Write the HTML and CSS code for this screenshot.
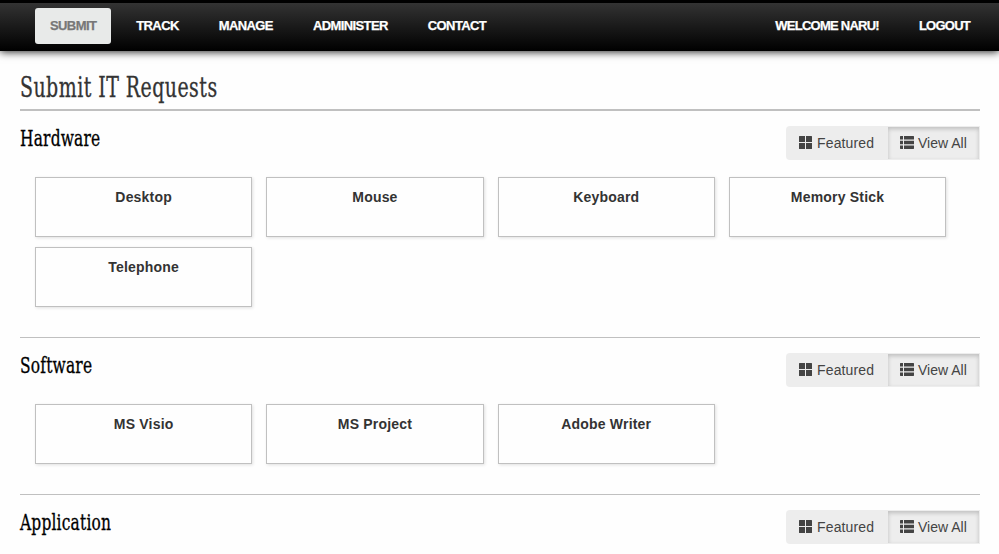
FILE: index.html
```html
<!DOCTYPE html>
<html lang="en">
<head>
<meta charset="utf-8">
<title>Submit IT Requests</title>
<link rel="stylesheet" href="styles.css">
</head>
<body>
<svg class="sprite" aria-hidden="true">
  <symbol id="grid" viewBox="0 0 14 14"><path d="M.6 0H6v6H0V.6Q0 0 .6 0zM7 0h5.400q.6 0 .6.6V6H7zM0 7h6v6H.6Q0 13 0 12.400zM7 7h6v5.400q0 .6-.6.6H7z"/></symbol>
  <symbol id="list" viewBox="0 0 14 14"><path d="M.5 0H3v3.500H0V.5zM4 0h9.500l.5.5v3H4zM0 4.800h3v3.500H0zM4 4.800h10v3.500H4zM0 9.500h3V13H.5l-.5-.5zM4 9.500h10v3l-.5.5H4z"/></symbol>
</svg>
<nav class="navbar">
  <a class="nav-link active">SUBMIT</a>
  <a class="nav-link">TRACK</a>
  <a class="nav-link">MANAGE</a>
  <a class="nav-link">ADMINISTER</a>
  <a class="nav-link">CONTACT</a>
  <a class="nav-link account push">WELCOME NARU!</a>
  <a class="nav-link account">LOGOUT</a>
</nav>
<main class="content">
  <h1 class="title"><span class="narrow">Submit IT Requests</span></h1>
  <section class="category">
    <header class="category-head">
      <h2 class="category-name"><span class="narrow">Hardware</span></h2>
      <div class="toggle">
        <a class="toggle-btn"><svg class="icon"><use href="#grid"/></svg>Featured</a>
        <a class="toggle-btn selected"><svg class="icon"><use href="#list"/></svg>View All</a>
      </div>
    </header>
    <div class="cards">
      <div class="card">Desktop</div>
      <div class="card">Mouse</div>
      <div class="card">Keyboard</div>
      <div class="card">Memory Stick</div>
      <div class="card">Telephone</div>
    </div>
  </section>
  <section class="category">
    <header class="category-head">
      <h2 class="category-name"><span class="narrow">Software</span></h2>
      <div class="toggle">
        <a class="toggle-btn"><svg class="icon"><use href="#grid"/></svg>Featured</a>
        <a class="toggle-btn selected"><svg class="icon"><use href="#list"/></svg>View All</a>
      </div>
    </header>
    <div class="cards">
      <div class="card">MS Visio</div>
      <div class="card">MS Project</div>
      <div class="card">Adobe Writer</div>
    </div>
  </section>
  <section class="category">
    <header class="category-head">
      <h2 class="category-name"><span class="narrow">Application</span></h2>
      <div class="toggle">
        <a class="toggle-btn"><svg class="icon"><use href="#grid"/></svg>Featured</a>
        <a class="toggle-btn selected"><svg class="icon"><use href="#list"/></svg>View All</a>
      </div>
    </header>
  </section>
</main>
</body>
</html>
```
FILE: styles.css
```css
* { box-sizing: border-box; }
body {
  margin: 0;
  background: #fefefe;
  color: #333;
  font-family: "Liberation Sans", Arial, sans-serif;
  overflow: hidden;
}
.sprite { display: none; }
.navbar {
  display: flex;
  align-items: flex-start;
  gap: 10px;
  height: 51px;
  padding: 5px 14px 0 35px;
  border-top: 3px solid #000;
  background: linear-gradient(#333, #000);
  box-shadow: 0 1px 8px rgba(0, 0, 0, .85);
}
.nav-link {
  height: 36px;
  padding: 0 15px;
  border-radius: 3px;
  color: #fff;
  font-size: 13px;
  font-weight: bold;
  letter-spacing: -.6px;
  line-height: 36px;
  white-space: nowrap;
  -webkit-text-stroke: .25px;
}
.nav-link.active { background: #e8eae9; color: #777; }
.nav-link.account { letter-spacing: -.75px; }
.push { margin-left: auto; }
.content { width: 960px; margin-left: 20px; }
.title, .category-name {
  margin: 0;
  font-family: "DejaVu Serif Condensed", "DejaVu Serif", serif;
  font-stretch: condensed;
  font-weight: normal;
  white-space: nowrap;
  -webkit-text-stroke: .3px;
}
.narrow { display: inline-block; transform: scaleX(.78); transform-origin: left; }
.title {
  height: 60px;
  padding-top: 17px;
  border-bottom: 2px solid #c0c0c0;
  font-size: 27px;
  letter-spacing: .6px;
  line-height: 40px;
}
.category { padding: 15px 0 30px; border-bottom: 1px solid #c0c0c0; }
.category-head { display: flex; justify-content: space-between; height: 34px; }
.category-name { color: #000; font-size: 22px; letter-spacing: .25px; line-height: 26px; }
.toggle { display: flex; width: 194px; }
.toggle-btn {
  display: flex;
  align-items: center;
  width: 102px;
  padding-left: 13px;
  border-radius: 4px 0 0 4px;
  background: #ededed;
  color: #444;
  font-size: 14px;
  letter-spacing: .15px;
  white-space: nowrap;
}
.toggle-btn.selected {
  width: 92px;
  padding-left: 12px;
  border-radius: 0;
  letter-spacing: 0;
  border: solid #ededed;
  border-width: 1px 1px 1px 0;
  box-shadow: inset 0 2px 4px rgba(0, 0, 0, .2);
}
.icon { width: 14px; height: 14px; margin-right: 4px; fill: #444; }
.cards {
  display: grid;
  grid-template-columns: repeat(4, 217.3px);
  gap: 10px 14px;
  padding: 17px 0 0 15px;
}
.card {
  height: 60px;
  padding-top: 11px;
  border: 1px solid #c0c0c0;
  background: #fefefe;
  box-shadow: 1px 1px 3px rgba(0, 0, 0, .12);
  font-size: 14px;
  font-weight: bold;
  letter-spacing: .2px;
  line-height: 17px;
  text-align: center;
}
```
